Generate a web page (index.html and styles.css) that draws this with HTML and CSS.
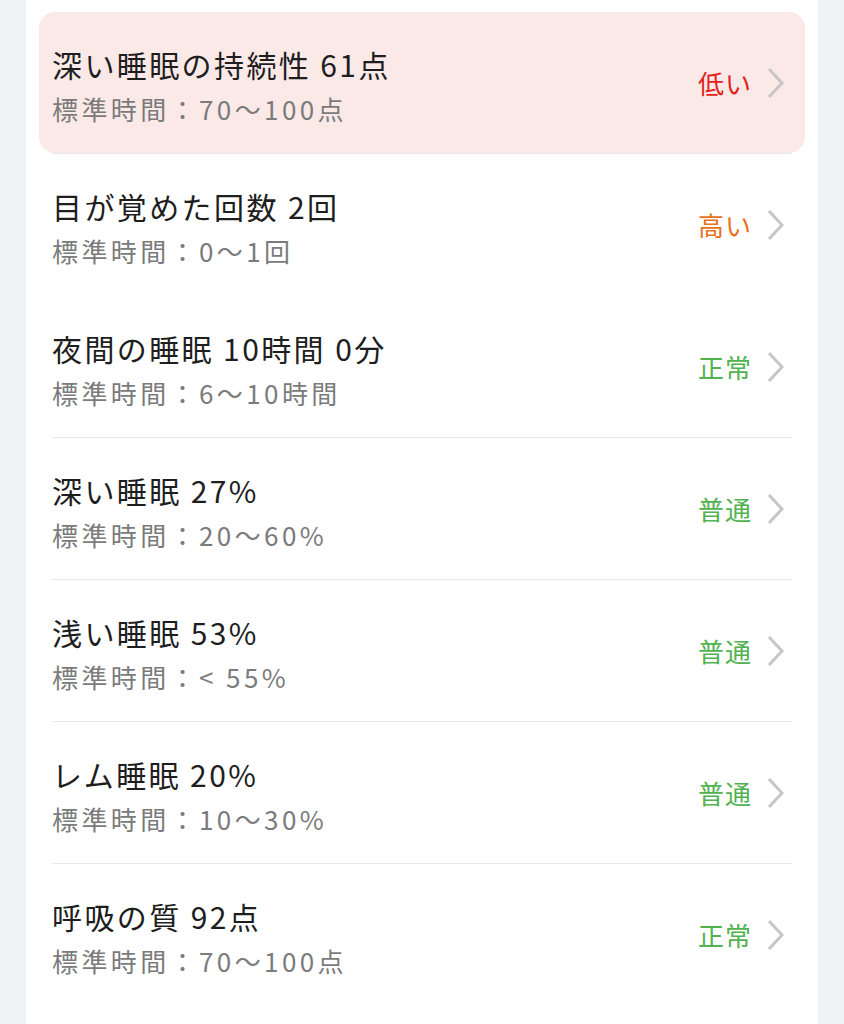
FILE: index.html
```html
<!DOCTYPE html>
<html lang="ja">

<head>
    <meta charset="UTF-8">
    <meta name="viewport" content="width=device-width, initial-scale=1.0">
    <title>睡眠の詳細</title>
    <link rel="stylesheet" href="styles.css">
</head>

<body>
    <div class="card">
        <div class="item item--alert">
            <div class="info">
                <div class="title">深い睡眠の持続性 61点</div>
                <div class="range">標準時間：70〜100点</div>
            </div>
            <span class="state low">低い</span>
            <svg class="chev" viewBox="0 0 18 32"><polyline points="2,2 15,16 2,30" /></svg>
        </div>
        <div class="sep"></div>

        <div class="item">
            <div class="info">
                <div class="title">目が覚めた回数 2回</div>
                <div class="range">標準時間：0〜1回</div>
            </div>
            <span class="state high">高い</span>
            <svg class="chev" viewBox="0 0 18 32"><polyline points="2,2 15,16 2,30" /></svg>
        </div>
        <div class="sep sep--none"></div>

        <div class="item">
            <div class="info">
                <div class="title">夜間の睡眠 10時間 0分</div>
                <div class="range">標準時間：6〜10時間</div>
            </div>
            <span class="state ok">正常</span>
            <svg class="chev" viewBox="0 0 18 32"><polyline points="2,2 15,16 2,30" /></svg>
        </div>
        <div class="sep"></div>

        <div class="item">
            <div class="info">
                <div class="title">深い睡眠 27%</div>
                <div class="range">標準時間：20〜60%</div>
            </div>
            <span class="state ok">普通</span>
            <svg class="chev" viewBox="0 0 18 32"><polyline points="2,2 15,16 2,30" /></svg>
        </div>
        <div class="sep"></div>

        <div class="item">
            <div class="info">
                <div class="title">浅い睡眠 53%</div>
                <div class="range">標準時間：&lt; 55%</div>
            </div>
            <span class="state ok">普通</span>
            <svg class="chev" viewBox="0 0 18 32"><polyline points="2,2 15,16 2,30" /></svg>
        </div>
        <div class="sep"></div>

        <div class="item">
            <div class="info">
                <div class="title">レム睡眠 20%</div>
                <div class="range">標準時間：10〜30%</div>
            </div>
            <span class="state ok">普通</span>
            <svg class="chev" viewBox="0 0 18 32"><polyline points="2,2 15,16 2,30" /></svg>
        </div>
        <div class="sep"></div>

        <div class="item">
            <div class="info">
                <div class="title">呼吸の質 92点</div>
                <div class="range">標準時間：70〜100点</div>
            </div>
            <span class="state ok">正常</span>
            <svg class="chev" viewBox="0 0 18 32"><polyline points="2,2 15,16 2,30" /></svg>
        </div>
    </div>
</body>

</html>
```

FILE: styles.css
```css
* {
    margin: 0;
    padding: 0;
    box-sizing: border-box;
}

body {
    background-color: #eff3f5;
    font-family: "Noto Sans CJK JP", "Noto Sans", sans-serif;
}

.card {
    background-color: #fff;
    margin: 0 26px;
    padding: 12px 13px 17px;
    min-height: 1024px;
}

.item {
    display: flex;
    align-items: center;
    height: 141px;
    padding: 0 20px 0 13px;
    border-radius: 16px;
}

.item--alert {
    background-color: #fbe9e8;
}

.info {
    flex: 1;
    align-self: flex-start;
    padding-top: 32px;
}

.title {
    font-size: 30px;
    line-height: 40px;
    letter-spacing: 2.4px;
    color: #1e1e1e;
}

.range {
    margin-top: 7px;
    font-size: 26px;
    line-height: 36px;
    letter-spacing: 3.4px;
    color: #7b7b7b;
}

.state {
    font-size: 26px;
    letter-spacing: 1px;
    margin-right: 15px;
}

.low {
    color: #e2221c;
}

.high {
    color: #e7711d;
}

.ok {
    color: #52b24f;
}

.chev {
    width: 18px;
    height: 32px;
    fill: none;
    stroke: #c6c6c6;
    stroke-width: 3;
}

.sep {
    height: 1px;
    margin: 0 13px;
    background-color: #e9e9e9;
}

.sep--none {
    background-color: transparent;
}
```
